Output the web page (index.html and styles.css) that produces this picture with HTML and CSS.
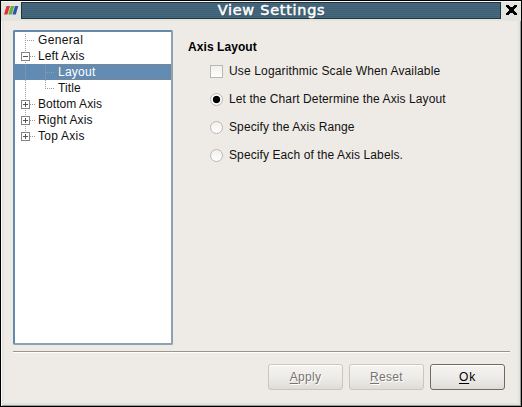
FILE: index.html
```html
<!DOCTYPE html>
<html lang="en">
<head>
<meta charset="utf-8">
<title>View Settings</title>
<link rel="stylesheet" href="styles.css">
</head>
<body>
<div class="window">
  <header class="titlebar">
    <svg class="logo" width="19" height="17" viewBox="0 0 19 17">
      <path d="M4.500 4h3.500l-2.500 8.500H2z" fill="#d8343b"/>
      <path d="M8.800 4h3.500l-2.500 8.500H6.300z" fill="#64b143"/>
      <path d="M13 4h3.300l-2.500 8.500h-3.300z" fill="#2b51ad"/>
    </svg>
    <h1 class="caption"><span>View Settings</span></h1>
    <svg class="close" width="19" height="17" viewBox="0 0 19 17" shape-rendering="crispEdges">
      <path d="M5 3h3v1h1v1h1v1V5h1V5h1V4h1V3h3v2h-1v1h-1v1h-1v2h1v1h1v1h1v2h-3v-1h-1v-1h-3v1H8v1H5v-2h1v-1h1V9h1V7H7V6H6V5H5z" fill="#000"/>
    </svg>
  </header>
  <main class="content">
    <ul class="tree">
      <li><svg width="23" height="16" shape-rendering="crispEdges"><path class="dots" d="M10.500 2v14M10 8.500h10"/></svg><span class="t-general">General</span></li>
      <li><svg width="23" height="16" shape-rendering="crispEdges"><path class="dots" d="M10.500 0v16M15 8.500h6"/><path class="box" d="M6.500 4.500h8v8h-8z"/><path class="sign" d="M8 8.500h5"/></svg><span class="t-left">Left Axis</span></li>
      <li class="selected"><svg width="43" height="16" shape-rendering="crispEdges"><path class="dots" d="M10.500 0v16M30.500 0v16M30 8.500h10"/></svg><span class="t-layout">Layout</span></li>
      <li><svg width="43" height="16" shape-rendering="crispEdges"><path class="dots" d="M10.500 0v16M30.500 0v9M30 8.500h10"/></svg><span class="t-title">Title</span></li>
      <li><svg width="23" height="16" shape-rendering="crispEdges"><path class="dots" d="M10.500 0v16M15 8.500h6"/><path class="box" d="M6.500 4.500h8v8h-8z"/><path class="sign" d="M8 8.500h5M10.500 6v5"/></svg><span class="t-bottom">Bottom Axis</span></li>
      <li><svg width="23" height="16" shape-rendering="crispEdges"><path class="dots" d="M10.500 0v16M15 8.500h6"/><path class="box" d="M6.500 4.500h8v8h-8z"/><path class="sign" d="M8 8.500h5M10.500 6v5"/></svg><span class="t-right">Right Axis</span></li>
      <li><svg width="23" height="16" shape-rendering="crispEdges"><path class="dots" d="M10.500 0v4M15 8.500h6"/><path class="box" d="M6.500 4.500h8v8h-8z"/><path class="sign" d="M8 8.500h5M10.500 6v5"/></svg><span class="t-top">Top Axis</span></li>
    </ul>
    <section class="panel">
      <h2>Axis Layout</h2>
      <div class="option"><i class="check"></i><span class="o-log">Use Logarithmic Scale When Available</span></div>
      <div class="option"><i class="radio on"></i><span>Let the Chart Determine the Axis Layout</span></div>
      <div class="option"><i class="radio"></i><span>Specify the Axis Range</span></div>
      <div class="option"><i class="radio"></i><span>Specify Each of the Axis Labels.</span></div>
    </section>
  </main>
  <footer class="footer">
    <button class="disabled"><span><u>A</u>pply</span></button>
    <button class="disabled"><span><u>R</u>eset</span></button>
    <button class="ok"><span><u>O</u>k</span></button>
  </footer>
</div>
</body>
</html>
```
FILE: styles.css
```css
* { box-sizing: border-box; margin: 0; padding: 0; }
body {
  width: 522px;
  height: 407px;
  overflow: hidden;
  font: 12px/16px "Liberation Sans", Arial, sans-serif;
  color: #111;
}
.window {
  height: 407px;
  border: 1px solid #000;
  background: #eeebe6;
  box-shadow: inset 1px 1px #fafafa, inset -1px -1px #999b96, inset 3px 0 #e4e4df, inset -3px -3px #e2e3de;
}
.titlebar {
  display: flex;
  height: 20px;
  padding: 0 1px;
  background: #e4e4df;
  border-top: 1px solid #fafafa;
}
.caption {
  width: 480px;
  height: 17px;
  border: 1px solid #1d3442;
  background: repeating-linear-gradient(#48697d 0 1px, #3d6074 1px 2px);
  color: #fff;
  text-align: center;
  font: normal 14.5px/15px "DejaVu Sans", sans-serif;
  letter-spacing: .7px;
  -webkit-text-stroke: .5px #fff;
  text-shadow: 1px 1px #1f344080;
  padding-left: 21px;
}
.content { display: flex; height: 330px; padding: 9px 12px 0; }
.tree {
  width: 160px;
  height: 315px;
  border: 2px solid;
  border-color: #6489aa #8ba2b5 #8ba2b5 #6489aa;
  border-radius: 2px;
  background: #fff;
  list-style: none;
}
.tree li { display: flex; height: 16px; white-space: nowrap; }
.tree svg { flex: none; }
.tree .selected { background: #628bb3; color: #fff; }
.selected span { flex: 1; outline: 1px dotted #8c8275; outline-offset: -1px; }
.dots { fill: none; stroke: #9c9c9c; stroke-dasharray: 1 1; }
.box { fill: #fff; stroke: #858585; }
.sign { fill: none; stroke: #555; }
.t-general { letter-spacing: .35px; }
.t-left, .t-title, .t-right { letter-spacing: .13px; }
.t-bottom { letter-spacing: .06px; }
.t-layout, .t-top { letter-spacing: .25px; }
.panel { flex: 1; padding: 9px 0 0 15px; white-space: nowrap; }
h2 { font-size: 12px; line-height: 16px; color: #000; letter-spacing: .07px; }
.option { display: flex; align-items: center; height: 16px; margin: 0 0 12px 22px; letter-spacing: .1px; }
h2 + .option { margin-top: 8px; }
.o-log { letter-spacing: .15px; }
.check, .radio { flex: none; width: 13px; height: 13px; border: 1px solid #bbb8b3; background: linear-gradient(#f1f0ee, #fff); margin-right: 6px; }
.radio { border-radius: 50%; }
.on { background: radial-gradient(circle, #000 0 3.3px, #f8f8f7 4.1px); }
.footer {
  display: flex;
  justify-content: flex-end;
  gap: 6px;
  height: 52px;
  margin: 0 11px 0 12px;
  padding: 12px 5px 0 0;
  border-top: 1px solid #999591;
  box-shadow: inset 0 1px #fff;
}
button {
  width: 75px;
  height: 26px;
  border: 1px solid #6d6a67;
  border-radius: 3px;
  background: linear-gradient(#f5f3f1, #eeece9 50%, #dfdcd8);
  box-shadow: inset 0 1px #fff;
  color: #000;
  font: 12px/16px "Liberation Sans", Arial, sans-serif;
  letter-spacing: .3px;
}
.disabled { border-color: #c9c6c1; color: #77736f; text-shadow: 1px 1px #fff; }
.ok { letter-spacing: .8px; }
u { text-decoration: underline; text-underline-offset: 2px; text-decoration-skip-ink: none; }
```
